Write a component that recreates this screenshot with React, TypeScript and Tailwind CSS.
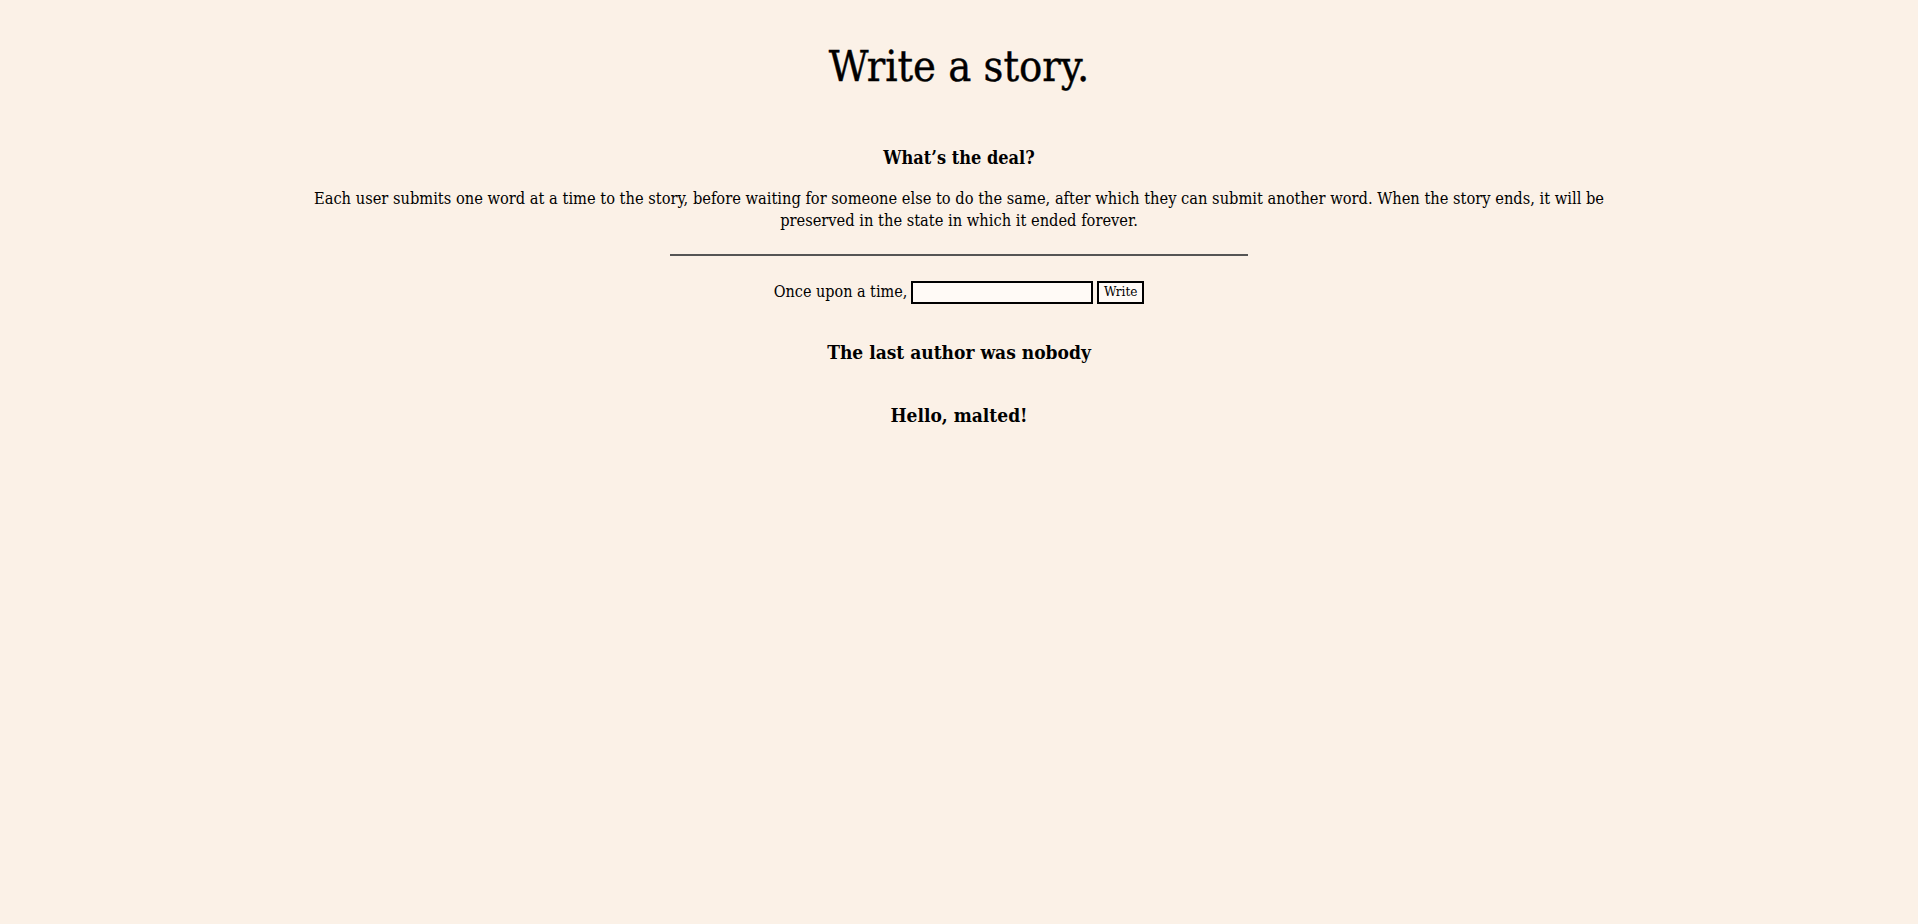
import React from "react";

export default function App() {
  return (
    <div
      className="min-h-[924px] w-full bg-[#fbf1e7] text-black text-center"
      style={{ fontFamily: '"DejaVu Serif Condensed", "DejaVu Serif", serif' }}
    >
      <div className="pt-[38px]">
        <h1 className="text-[43px] leading-[56px] font-normal [-webkit-text-stroke:0.4px_#000]">Write a story.</h1>
      </div>
      <h3 className="mt-[52px] text-[18px] leading-[24px] font-bold">What’s the deal?</h3>
      <div className="mx-auto w-[1340px] mt-[18px]">
        <p className="text-[16.3px] leading-[22px]">
          Each user submits one word at a time to the story, before waiting for someone else to do the same, after which they can submit another word. When the story ends, it will be preserved in the state in which it ended forever.
        </p>
      </div>
      <div className="mx-auto mt-[22px] w-[578px] h-[2px] bg-[#555]" />
      <div className="mt-[24px] flex items-center justify-center text-[16px]">
        <span>Once upon a time,</span>
        <input
          type="text"
          className="ml-[4px] w-[182px] h-[23px] border-2 border-black bg-[#fffaf6] outline-none"
        />
        <button className="ml-[4px] h-[23px] w-[47px] border-2 border-black bg-[#fffaf6] text-[13.5px] leading-none">
          Write
        </button>
      </div>
      <h3 className="mt-[36px] text-[19px] leading-[24px] font-bold">The last author was nobody</h3>
      <h3 className="mt-[39px] text-[19px] leading-[24px] font-bold">Hello, malted!</h3>
    </div>
  );
}
